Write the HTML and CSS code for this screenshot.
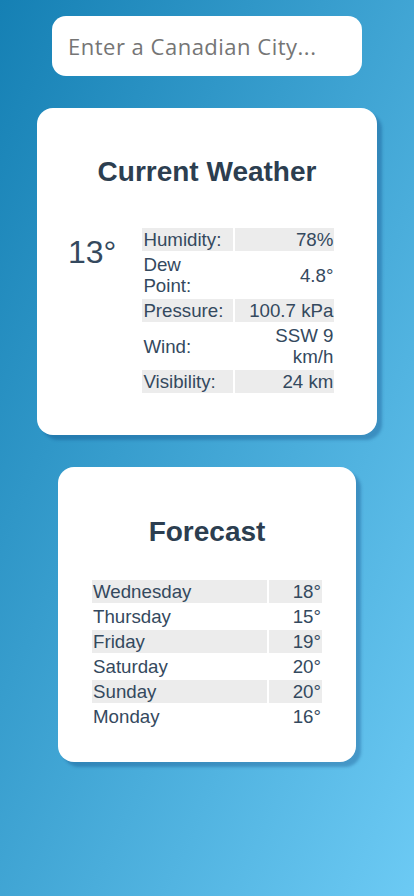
FILE: index.html
```html
<!DOCTYPE html>
<html lang="en">
<head>
<meta charset="utf-8">
<title>Canadian Weather</title>
<link rel="stylesheet" href="styles.css">
</head>
<body>
<main class="page">
  <input class="search" type="text" placeholder="Enter a Canadian City...">

  <section class="card card-current">
    <h2 class="card-title">Current Weather</h2>
    <div class="current-row">
      <div class="temp">13°</div>
      <table class="details">
        <tbody>
          <tr class="alt"><td class="label">Humidity:</td><td class="value">78%</td></tr>
          <tr><td class="label">Dew Point:</td><td class="value">4.8°</td></tr>
          <tr class="alt"><td class="label">Pressure:</td><td class="value">100.7 kPa</td></tr>
          <tr><td class="label">Wind:</td><td class="value">SSW 9 km/h</td></tr>
          <tr class="alt"><td class="label">Visibility:</td><td class="value">24 km</td></tr>
        </tbody>
      </table>
    </div>
  </section>

  <section class="card card-forecast">
    <h2 class="card-title">Forecast</h2>
    <table class="forecast">
      <tbody>
        <tr class="alt"><td class="day">Wednesday</td><td class="hi">18°</td></tr>
        <tr><td class="day">Thursday</td><td class="hi">15°</td></tr>
        <tr class="alt"><td class="day">Friday</td><td class="hi">19°</td></tr>
        <tr><td class="day">Saturday</td><td class="hi">20°</td></tr>
        <tr class="alt"><td class="day">Sunday</td><td class="hi">20°</td></tr>
        <tr><td class="day">Monday</td><td class="hi">16°</td></tr>
      </tbody>
    </table>
  </section>
</main>
</body>
</html>
```

FILE: styles.css
```css
html {
  min-height: 100%;
  background: linear-gradient(to bottom right, #1580b4, #6ccaf4);
}

body {
  margin: 0;
  min-height: 100vh;
  font-family: "Liberation Sans", Arial, sans-serif;
  color: #2c3e50;
}

.page {
  display: flex;
  flex-direction: column;
  align-items: center;
  gap: 32px;
  padding-top: 16px;
}

.search {
  box-sizing: border-box;
  width: 310px;
  height: 60px;
  border: none;
  border-radius: 14px;
  padding: 0 16px;
  background: #fff;
  font-family: "Open Sans", "Noto Sans", sans-serif;
  font-size: 22px;
  letter-spacing: 0.5px;
  color: #333;
  outline: none;
}

.search::placeholder {
  color: #757575;
}

.card {
  box-sizing: border-box;
  background: #fff;
  border-radius: 16px;
  box-shadow: 5px 5px 3px rgba(10, 60, 120, 0.3);
}

.card-title {
  margin: 0;
  font-size: 28px;
  line-height: 32px;
  font-weight: bold;
  text-align: center;
  color: #2c3e50;
}

.card-current {
  width: 340px;
  padding: 48px 0 40px;
}

.current-row {
  display: flex;
  align-items: flex-start;
  gap: 24px;
  margin-top: 38px;
  padding-left: 31px;
}

.temp {
  margin-top: 8px;
  font-size: 32px;
  color: #34495e;
}

table {
  border-collapse: separate;
  border-spacing: 2px;
  font-size: 18.72px;
  line-height: 21px;
  color: #34495e;
  table-layout: fixed;
}

td {
  padding: 1px;
  vertical-align: middle;
}

tr.alt td {
  background: #ececec;
}

.details {
  width: 196px;
}

.details .label {
  width: 89px;
  text-align: left;
}

.details .value {
  text-align: right;
}

.card-forecast {
  width: 298px;
  padding: 49px 32px 32px;
}

.forecast {
  width: 234px;
  margin: 30px auto 0;
}

.forecast .day {
  width: 173px;
  text-align: left;
}

.forecast .hi {
  text-align: right;
}
```
